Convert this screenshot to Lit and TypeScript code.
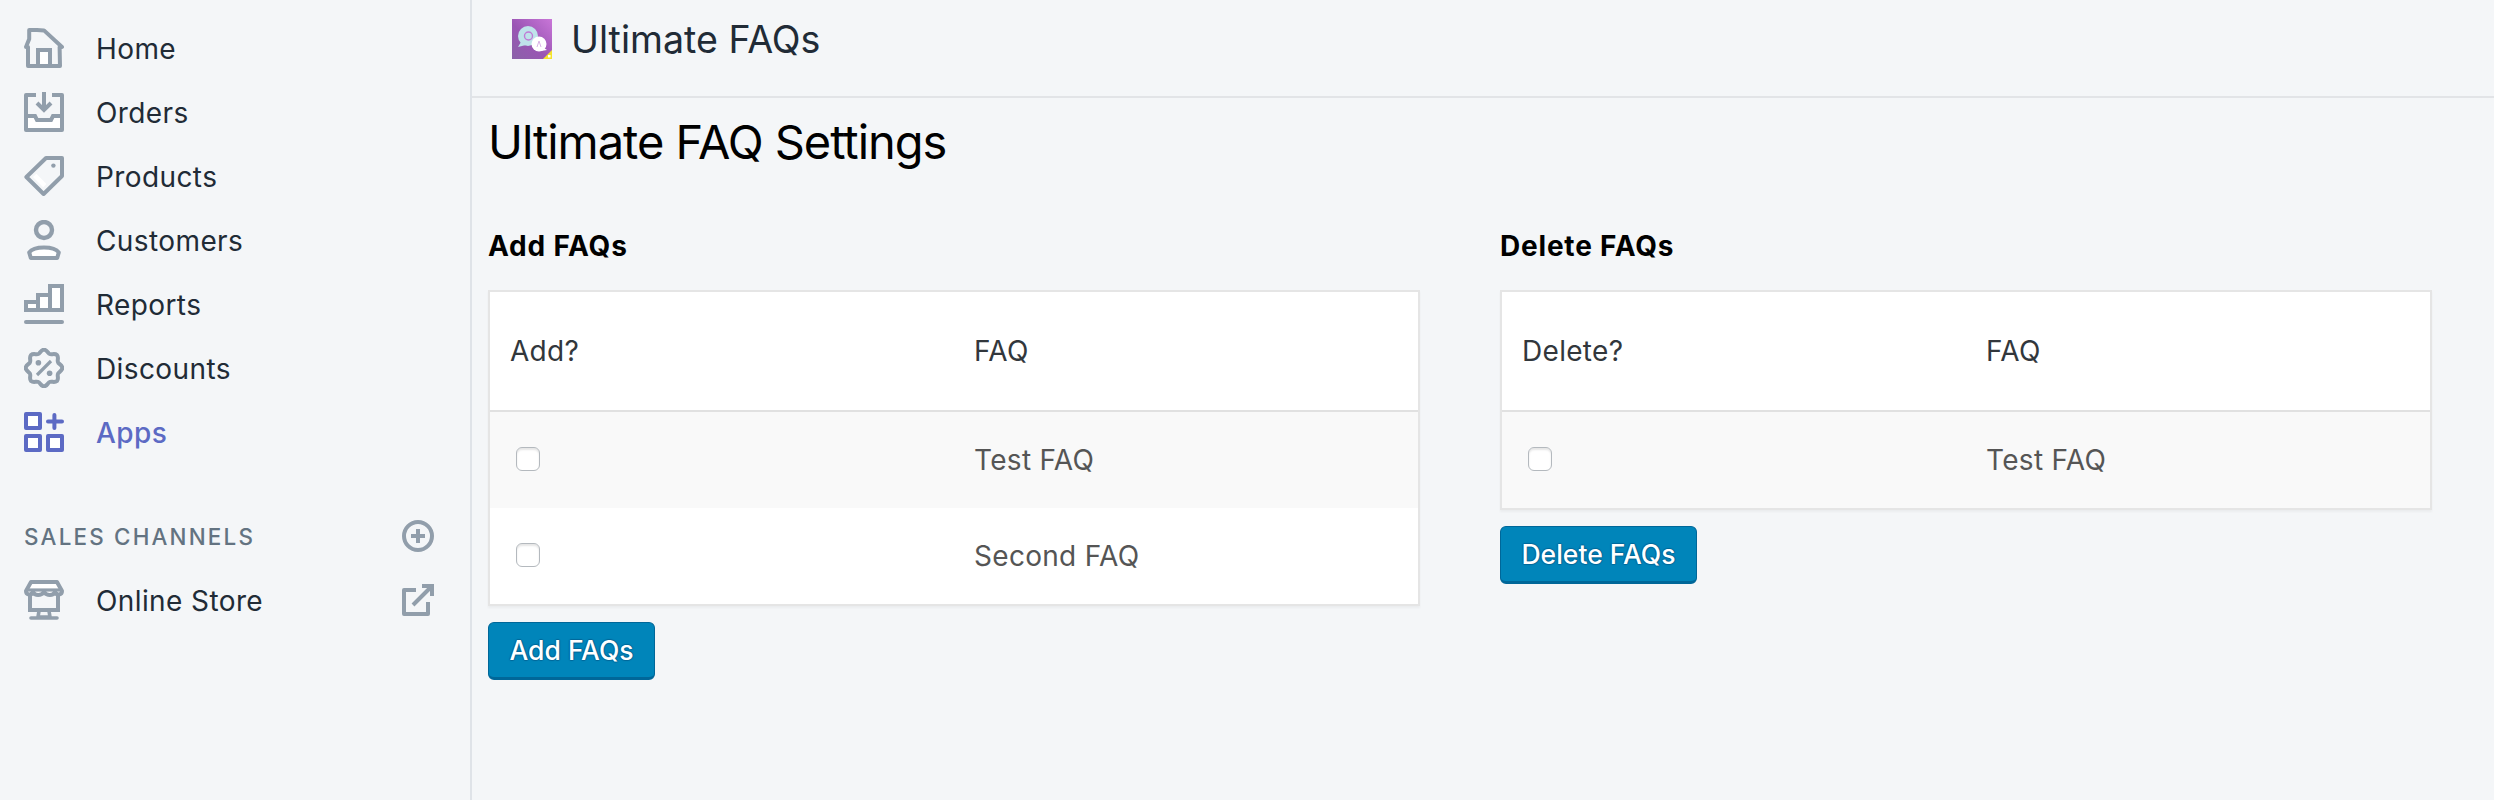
import { LitElement, html, css, svg } from "lit";
import { customElement } from "lit/decorators.js";

const scallop = (() => {
  const n = 8, cx = 10, cy = 10;
  let d = "";
  const p = (ang: number, r: number) => `${(cx + r * Math.cos(ang)).toFixed(2)} ${(cy + r * Math.sin(ang)).toFixed(2)}`;
  for (let i = 0; i < n; i++) {
    const a = ((i * 360) / n - 90) * Math.PI / 180;
    const m = (((i + 0.5) * 360) / n - 90) * Math.PI / 180;
    const c = (((i + 1) * 360) / n - 90) * Math.PI / 180;
    if (i === 0) d += `M${p(a, 9.2)}`;
    d += `C${p(a + 0.18, 9.2)} ${p(m - 0.12, 7.4)} ${p(m, 7.6)}C${p(m + 0.12, 7.4)} ${p(c - 0.18, 9.2)} ${p(c, 9.2)}`;
  }
  return d + "Z";
})();

const ICONS: Record<string, unknown> = {
  home: svg`<path d="M2.6 5.5V1H6.5L10 1.2 19 9.5 17.8 9.5 18 19H2V9.5L1 9.5z" fill="none" stroke="currentColor" stroke-width="2" stroke-linejoin="round"/><rect x="7" y="11" width="6" height="8" fill="#fff" stroke="currentColor" stroke-width="2"/>`,
  orders: svg`<path d="M6 1.5H1V19H19V1.5H14" fill="none" stroke="currentColor" stroke-width="2" stroke-linejoin="round"/><path d="M2 13H6L7 15H13L14 13H18V18H2Z" fill="#fff" stroke="none"/><path d="M2 12H5.5L6.5 14H13.5L14.5 12H18" fill="none" stroke="currentColor" stroke-width="2"/><path d="M10 0V8.5M6.5 5.5 10 9l3.5-3.5" fill="none" stroke="currentColor" stroke-width="2"/>`,
  products: svg`<path d="M19 1H11L1.2 10.5 9.8 19 19 10Z" fill="none" stroke="currentColor" stroke-width="2" stroke-linejoin="round"/><path d="M4.5 10.5 6.2 8.9 11.2 14 9.6 15.6Z" fill="#fff"/><circle cx="14.7" cy="4.8" r="1.1" fill="currentColor"/>`,
  customers: svg`<circle cx="10" cy="5" r="4" fill="none" stroke="currentColor" stroke-width="2.2"/><path d="M3.4 19 2.6 16.2C5 13 15 13 17.4 16.2L16.6 19Z" fill="#fff" stroke="currentColor" stroke-width="2" stroke-linejoin="round"/>`,
  reports: svg`<rect x="13" y="1" width="6" height="12" fill="#fff" stroke="currentColor" stroke-width="2"/><rect x="7" y="5.5" width="6" height="7.5" fill="#fff" stroke="currentColor" stroke-width="2"/><rect x="1" y="9" width="6" height="4" fill="#fff" stroke="currentColor" stroke-width="2"/><rect x="0" y="18" width="20" height="2" rx="1" fill="currentColor"/>`,
  discounts: svg`<path d="${scallop}" fill="none" stroke="currentColor" stroke-width="2" stroke-linejoin="round"/><path d="M6.5 13.5 13.5 6.5" stroke="currentColor" stroke-width="1.6"/><circle cx="7.2" cy="7.4" r="1.4" fill="currentColor"/><circle cx="12.8" cy="12.6" r="1.4" fill="currentColor"/>`,
  apps: svg`<rect x="1" y="1" width="7" height="7" fill="#fff" stroke="currentColor" stroke-width="2" stroke-linejoin="round"/><rect x="1" y="12" width="7" height="7" fill="#fff" stroke="currentColor" stroke-width="2" stroke-linejoin="round"/><rect x="12" y="12" width="7" height="7" fill="#fff" stroke="currentColor" stroke-width="2" stroke-linejoin="round"/><path d="M12 4.8H19M15.2 1.5V8" stroke="currentColor" stroke-width="2" stroke-linecap="round" fill="none"/>`,
  store: svg`<path d="M3.5 1H16.5L19 5.5C19 7.5 16.5 8 15.5 6 14.5 8 11.5 8 10 6 8.5 8 5.5 8 4.5 6 3.5 8 1 7.5 1 5.5Z" fill="#fff" stroke="currentColor" stroke-width="2" stroke-linejoin="round"/><path d="M2 5H18" stroke="currentColor" stroke-width="1.6" fill="none"/><path d="M3 8V15H17V8" fill="none" stroke="currentColor" stroke-width="2"/><path d="M7.5 15.5 7 18.5H13L12.5 15.5M3.5 19H16.5" fill="none" stroke="currentColor" stroke-width="1.8" stroke-linecap="round"/>`,
};

@customElement("app-root")
export class AppRoot extends LitElement {
  static styles = css`
    :host {
      display: flex;
      min-height: 800px;
      background: #f4f6f8;
      font-family: Inter, "Liberation Sans", sans-serif;
      color: #212b36;
    }
    .side {
      width: 470px;
      flex: none;
      padding-top: 16px;
      border-right: 2px solid #dfe3e8;
    }
    .nav {
      display: flex;
      align-items: center;
      height: 64px;
      padding-left: 24px;
      gap: 32px;
      font-size: 28px;
      letter-spacing: 0.4px;
      font-weight: 400;
    }
    .nav span { padding-top: 2px; }
    .nav svg { width: 40px; height: 40px; color: #919eab; flex: none; }
    .nav.active { color: #5c6ac4; font-weight: 500; }
    .nav.active svg { color: #5c6ac4; }
    .section {
      display: flex;
      align-items: center;
      justify-content: space-between;
      height: 64px;
      margin-top: 40px;
      padding: 0 36px 0 24px;
      font-size: 22.4px;
      font-weight: 500;
      letter-spacing: 2.2px;
      color: #637381;
    }
    .end { width: 32px; height: 32px; color: #919eab; flex: none; }
    .nav svg.end { width: 32px; height: 32px; }
    .store { padding-right: 36px; }
    .store .label { flex: 1; }
    .main { flex: 1; min-width: 0; }
    .bar {
      display: flex;
      align-items: center;
      gap: 19px;
      height: 78px;
      padding: 0 0 18px 40px;
      border-bottom: 2px solid #e2e4e7;
      font-size: 37.6px;
      font-weight: 400;
      color: #212b36;
    }
    .logo { width: 40px; height: 40px; flex: none; display: block; }
    .content { padding: 0 62px 0 16px; }
    h1 {
      margin: 0;
      padding: 16px 0 0;
      height: 74px;
      font-size: 47px;
      letter-spacing: -1.05px;
      line-height: 56px;
      font-weight: 400;
      color: #000;
    }
    .cols { display: grid; grid-template-columns: 932px 932px; gap: 80px; margin-top: 42px; }
    h2 {
      margin: 0 0 28px;
      font-size: 28px;
      letter-spacing: 0.8px;
      line-height: 32px;
      font-weight: 700;
      color: #000;
    }
    table {
      width: 100%;
      table-layout: fixed;
      border-collapse: separate;
      border-spacing: 0;
      border: 2px solid #e5e5e5;
      background: #fff;
      box-shadow: 0 2px 2px rgba(0, 0, 0, 0.04);
      font-size: 28px;
      letter-spacing: 0.3px;
    }
    th, td { box-sizing: border-box; padding: 0 20px; }
    th {
      height: 120px;
      text-align: left;
      font-weight: 400;
      color: #32373c;
      border-bottom: 2px solid #e1e1e1;
    }
    td { height: 96px; color: #555; }
    tr.alt td { background: #f9f9f9; }
    .check {
      display: block;
      box-sizing: border-box;
      width: 24px;
      height: 24px;
      margin: -2px 0 0 6px;
      appearance: none;
      background: #fff;
      border: 1.5px solid #b4b9be;
      border-radius: 6px;
      box-shadow: inset 0 2px 2px rgba(0, 0, 0, 0.1);
    }
    button {
      display: block;
      margin-top: 16px;
      height: 58px;
      padding: 0 20.5px;
      border: 1px solid #006799;
      border-bottom-width: 3px;
      border-radius: 6px;
      background: #0085ba;
      color: #fff;
      font: 500 26.5px Inter, "Liberation Sans", sans-serif;
      text-shadow: 0 -1px 1px #006799, 1px 0 1px #006799, 0 1px 1px #006799, -1px 0 1px #006799;
    }
  `;

  private icon(name: string) {
    return html`<svg viewBox="0 0 20 20">${ICONS[name]}</svg>`;
  }

  private table(head: string, rows: string[]) {
    return html`<table>
      <thead><tr><th>${head}</th><th>FAQ</th></tr></thead>
      <tbody>
        ${rows.map(
          (r, i) => html`<tr class=${i % 2 === 0 ? "alt" : ""}>
            <td><input class="check" type="checkbox" /></td>
            <td>${r}</td>
          </tr>`
        )}
      </tbody>
    </table>`;
  }

  render() {
    const items = [
      ["home", "Home"],
      ["orders", "Orders"],
      ["products", "Products"],
      ["customers", "Customers"],
      ["reports", "Reports"],
      ["discounts", "Discounts"],
      ["apps", "Apps"],
    ];
    return html`
      <aside class="side">
        ${items.map(
          ([k, t]) => html`<div class="nav ${k === "apps" ? "active" : ""}">${this.icon(k)}<span>${t}</span></div>`
        )}
        <div class="section">
          <span>SALES CHANNELS</span>
          <svg class="end" viewBox="0 0 32 32"><circle cx="16" cy="16" r="14" fill="none" stroke="currentColor" stroke-width="4"/><path d="M16 9V23M9 16H23" stroke="currentColor" stroke-width="4"/></svg>
        </div>
        <div class="nav store">
          ${this.icon("store")}<span class="label">Online Store</span>
          <svg class="end" viewBox="0 0 32 32"><path d="M14 6H2V30H26V18" fill="none" stroke="currentColor" stroke-width="4" stroke-linejoin="round"/><path d="M20 2H30V12M30 2 11 21" fill="none" stroke="currentColor" stroke-width="4"/></svg>
        </div>
      </aside>
      <main class="main">
        <header class="bar">
          <svg class="logo" viewBox="0 0 40 40">
            <defs>
              <linearGradient id="lg" x1="1" y1="0" x2="0" y2="1">
                <stop offset="0" stop-color="#c976d8"/>
                <stop offset="0.55" stop-color="#9a55b4"/>
                <stop offset="1" stop-color="#8a62a8"/>
              </linearGradient>
            </defs>
            <rect width="40" height="40" fill="url(#lg)"/>
            <circle cx="16" cy="17" r="10" fill="#bfe3ea"/>
            <path d="M9 23 6 28 14 26Z" fill="#bfe3ea"/>
            <circle cx="27" cy="25" r="7.5" fill="#fff"/>
            <path d="M32 29 35 31 29 32Z" fill="#fff"/>
            <circle cx="16.5" cy="17" r="4" fill="none" stroke="#c07ad6" stroke-width="1.4"/>
            <path d="M25 28 27 22 29 28" fill="none" stroke="#d9b3e6" stroke-width="1"/>
            <path d="M40 31V40H31Z" fill="#f4e32c"/>
            <rect x="36" y="36" width="2.5" height="2.5" fill="#fff"/>
          </svg>
          <span>Ultimate FAQs</span>
        </header>
        <div class="content">
          <h1>Ultimate FAQ Settings</h1>
          <div class="cols">
            <section>
              <h2>Add FAQs</h2>
              ${this.table("Add?", ["Test FAQ", "Second FAQ"])}
              <button>Add FAQs</button>
            </section>
            <section>
              <h2>Delete FAQs</h2>
              ${this.table("Delete?", ["Test FAQ"])}
              <button>Delete FAQs</button>
            </section>
          </div>
        </div>
      </main>
    `;
  }
}
